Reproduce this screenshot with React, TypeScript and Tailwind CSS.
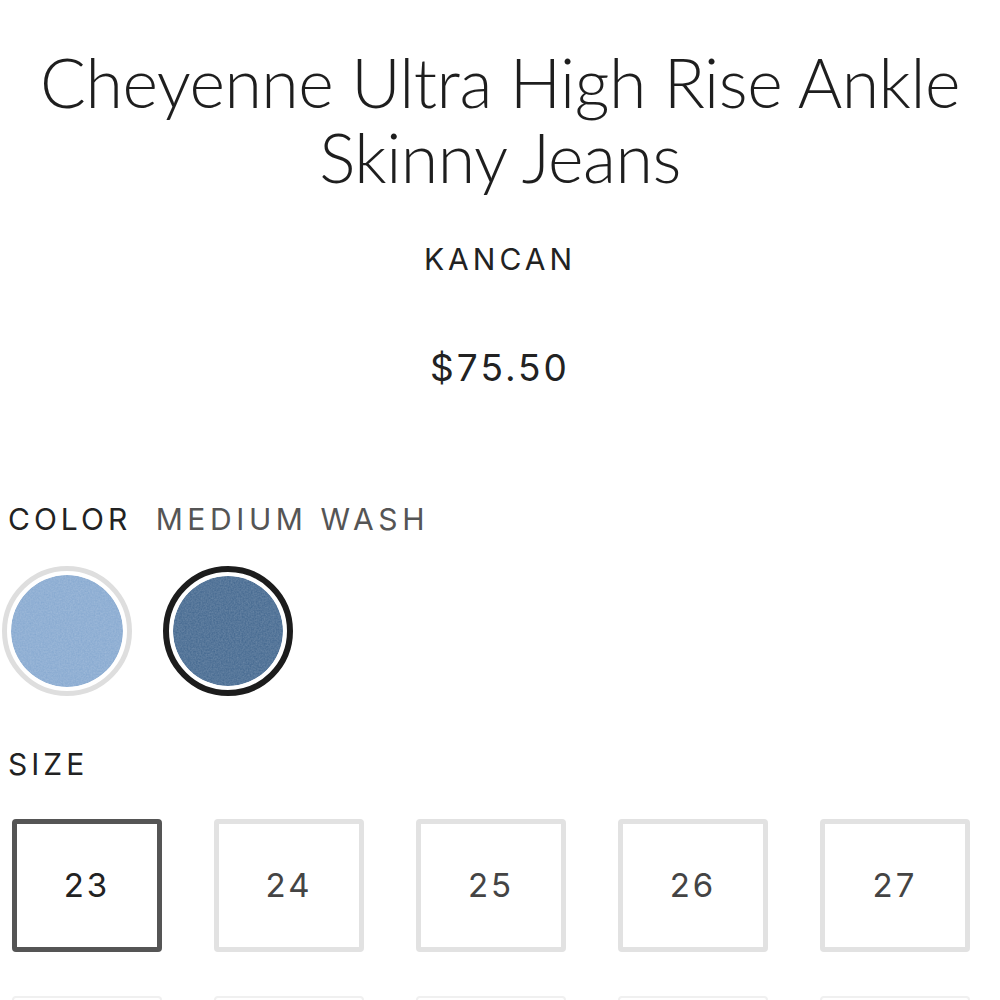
import React from "react";

const sizes = ["23", "24", "25", "26", "27"];

const Denim = ({ id, base }: { id: string; base: string }) => (
  <svg viewBox="0 0 100 100" className="h-full w-full rounded-full">
    <defs>
      <filter id={id} x="0" y="0" width="100%" height="100%">
        <feTurbulence type="fractalNoise" baseFrequency="0.7" numOctaves="3" seed="7" />
        <feColorMatrix
          type="matrix"
          values="0 0 0 0 1  0 0 0 0 1  0 0 0 0 1  0 0 0 0.22 -0.02"
        />
        <feComposite in2="SourceGraphic" operator="in" />
      </filter>
    </defs>
    <circle cx="50" cy="50" r="50" fill={base} />
    <circle cx="50" cy="50" r="50" fill="#fff" filter={`url(#${id})`} />
  </svg>
);

export default function App() {
  return (
    <div
      className="h-[1000px] w-[1000px] overflow-hidden bg-white text-[#222]"
      style={{ fontFamily: "Inter, 'Liberation Sans', sans-serif" }}
    >
      <div className="pt-[44px] text-center">
        <h1
          className="mx-auto text-[68px] font-light leading-[75px] tracking-[-0.5px] text-[#1e1e1e]"
          style={{ fontFamily: "Lato, 'Liberation Sans', sans-serif" }}
        >
          Cheyenne Ultra High Rise Ankle
          <br />
          Skinny Jeans
        </h1>
        <div className="mt-[50px] text-[30px] leading-none tracking-[4px]">KANCAN</div>
        <div className="mt-[75px] text-[37px] leading-none tracking-[3px]">$75.50</div>
      </div>

      <div className="mt-[118px] px-[8px] text-[30px] leading-none tracking-[4px]">
        COLOR <span className="ml-[12px] tracking-[4.6px] text-[#555]">MEDIUM WASH</span>
      </div>

      <div className="mt-[32px] flex gap-[31px] pl-[2px]">
        <button className="h-[130px] w-[130px] rounded-full border-[5px] border-[#dedede] p-[4px]">
          <Denim id="n1" base="#87a9d0" />
        </button>
        <button className="h-[130px] w-[130px] rounded-full border-[6px] border-[#1c1c1c] p-[4px]">
          <Denim id="n2" base="#456990" />
        </button>
      </div>

      <div className="mt-[53px] px-[8px] text-[30px] leading-none tracking-[4px]">SIZE</div>

      <div className="mt-[40px] grid grid-cols-[repeat(5,150px)] gap-x-[52px] gap-y-[44px] px-[12px]">
        {sizes.map((s, i) => (
          <button
            key={s}
            className={
              i === 0
                ? "flex h-[133px] items-center justify-center rounded-[4px] border-[5px] border-[#555] text-[33px] tracking-[3px] text-[#222]"
                : "flex h-[133px] items-center justify-center rounded-[4px] border-[5px] border-[#e2e2e2] text-[33px] tracking-[3px] text-[#444]"
            }
          >
            {s}
          </button>
        ))}
        {sizes.map((s) => (
          <div
            key={"next" + s}
            className="h-[133px] rounded-[4px] border-[2px] border-[#f0f0f0]"
          />
        ))}
      </div>
    </div>
  );
}
